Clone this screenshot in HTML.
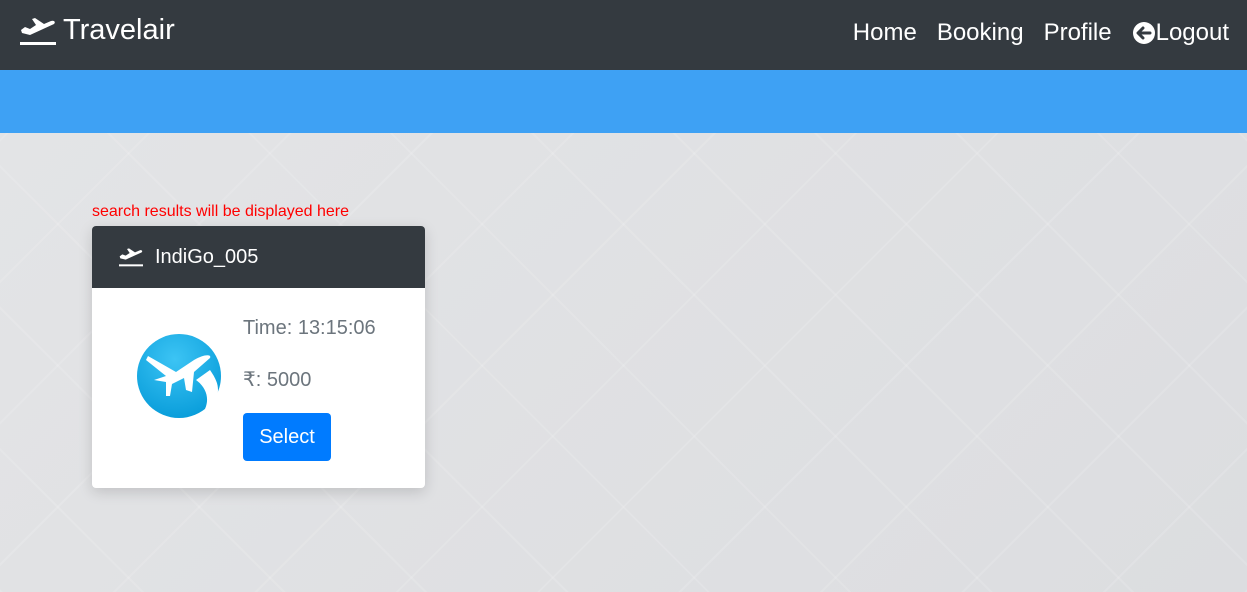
<!DOCTYPE html>
<html><head><meta charset="utf-8"><style>
*{margin:0;padding:0;box-sizing:border-box}
body{width:1247px;height:592px;overflow:hidden;font-family:"Liberation Sans",Arial,sans-serif;background:#dfe0e2;position:relative}
.pat{position:absolute;left:0;top:133px;width:1247px;height:459px;background:repeating-linear-gradient(45deg,rgba(255,255,255,.12) 0 2px,transparent 2px 100px),repeating-linear-gradient(-45deg,rgba(255,255,255,.12) 0 2px,transparent 2px 100px),linear-gradient(135deg,#e3e4e6,#dcdde0)}
.nav{position:absolute;left:0;top:0;width:1247px;height:70px;background:#343a40}
.navstrip{position:absolute;left:65px;top:68px;width:1130px;height:4px;background:#343a40;border-radius:0 0 4px 4px}
.blue{position:absolute;left:0;top:70px;width:1247px;height:63px;background:#3ea1f4}
.brand{position:absolute;left:20px;top:14px;color:#fff;font-size:29px;display:flex;align-items:center}
.brand svg{margin-right:7px}
.links{position:absolute;right:18px;top:19px;color:#fff;font-size:24px;display:flex;gap:20px;align-items:center}
.msg{position:absolute;left:92px;top:203px;color:#f00;font-size:16px}
.card{position:absolute;left:92px;top:226px;width:333px;height:262px;background:#fff;border-radius:4px;box-shadow:0 4px 14px rgba(0,0,0,.15);overflow:hidden}
.ch{height:62px;background:#343a40;color:#fff;font-size:20px;display:flex;align-items:center;padding-left:26px}
.ch svg{margin-right:11px}
.t{position:absolute;left:151px;color:#6c757d;font-size:20px}
.btn{position:absolute;left:151px;top:187px;width:88px;height:48px;background:#007bff;color:#fff;border-radius:4px;font-size:20px;display:flex;align-items:center;justify-content:center}
</style></head><body>
<div class="pat"></div>
<div class="nav"></div><div class="navstrip"></div>
<div class="blue"></div>
<div class="brand"><svg width="36" height="30" viewBox="0 0 36 30"><path d="M1 14 L5 11 L10 13 L16 9 L12 3 L15 2 L24 8 L31 5 C34 4 36 6 34 8 L10 19 L2 17 Z" fill="#fff"/><rect x="0" y="26" width="36" height="3" fill="#fff"/></svg>Travelair</div>
<div class="links"><span>Home</span><span>Booking</span><span>Profile</span><span style="display:flex;align-items:center"><svg width="24" height="24" viewBox="0 0 24 24"><circle cx="12" cy="12" r="11" fill="#fff"/><path d="M18 12H7M11 7l-5 5 5 5" stroke="#343a40" stroke-width="3" fill="none" stroke-linecap="round" stroke-linejoin="round"/></svg>Logout</span></div>
<div class="msg">search results will be displayed here</div>
<div class="card">
<div class="ch"><svg width="26" height="20" viewBox="0 0 36 30"><path d="M1 14 L5 11 L10 13 L16 9 L12 3 L15 2 L24 8 L31 5 C34 4 36 6 34 8 L10 19 L2 17 Z" fill="#fff"/><rect x="0" y="26" width="36" height="3" fill="#fff"/></svg>IndiGo_005</div>
<svg style="position:absolute;left:44px;top:108px" width="90" height="88" viewBox="0 0 90 88"><defs><radialGradient id="g" cx=".45" cy=".3" r=".7"><stop offset="0" stop-color="#3cc4f4"/><stop offset="1" stop-color="#0a9edb"/></radialGradient></defs><circle cx="43" cy="42" r="42" fill="url(#g)"/><path d="M12 22 L40 38 L58 26 C68 20 76 20 74 24 L58 38 L56 58 L50 56 L48 44 L36 50 L34 62 L30 62 L30 48 L18 46 L30 42 L10 26 Z" fill="#fff"/><path d="M60 46 C74 56 74 72 64 82 C74 78 82 68 82 56 C82 48 78 42 74 36 Z" fill="#fff"/></svg>
<div class="t" style="top:91px">Time: 13:15:06</div>
<div class="t" style="top:141px">₹: 5000</div>
<div class="btn">Select</div>
</div>
</body></html>
